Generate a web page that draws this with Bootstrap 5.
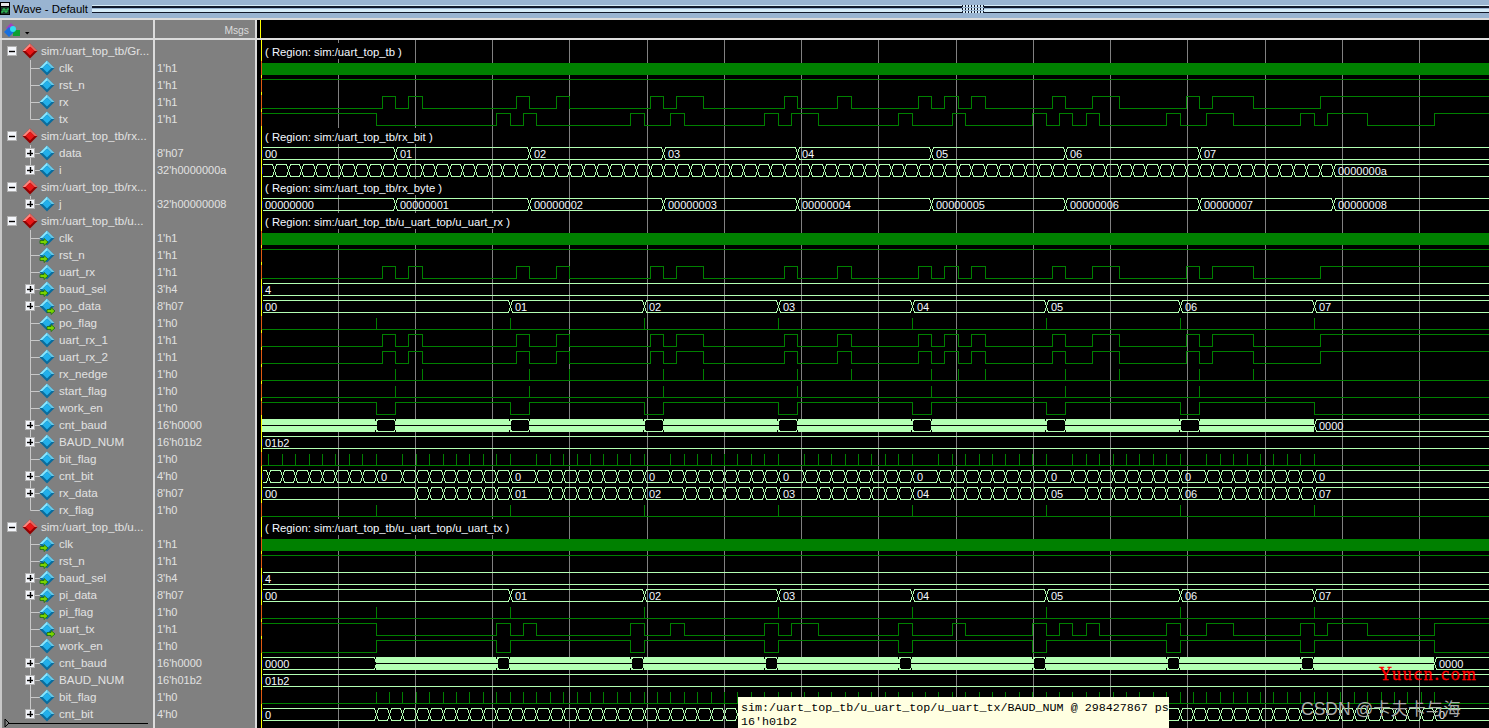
<!DOCTYPE html>
<html lang="en">
<head>
    <meta charset="UTF-8">
    <title>Wave - Default</title>
    <link href="https://cdn.jsdelivr.net/npm/bootstrap@5.3.0/dist/css/bootstrap.min.css" rel="stylesheet">
    <style>
        body { background: #000; font-family: "Liberation Sans", Arial, sans-serif; font-size: 11px; line-height: 17px; }
        .wtitle { height: 18px; background: #99b4d1; color: #000; font-size: 11.4px; line-height: 18px; }
        .wtitle-text { width: 81px; padding-left: 2px; white-space: nowrap; flex-shrink: 0; }
        .grip-lines { height: 9px; margin-top: 5px; background: linear-gradient(to bottom, #d6ecf8 0 1px, #10182a 1px 3px, #99b4d1 3px 4px, #d6ecf8 4px 7px, #10182a 7px 8px, #99b4d1 8px); }
        .grip-first { width: 870px; flex-shrink: 0; }
        .grip-dots { width: 22px; height: 9px; margin-top: 5px; flex-shrink: 0; background-image: repeating-linear-gradient(to bottom, transparent 0 2px, #99b4d1 2px 3px), repeating-linear-gradient(to right, #10182a 0 1px, #d6ecf8 1px 3px); }
        .wsep-h { height: 2px; background: #dcdcdc; }
        .wsep-v { width: 2px; background: #dcdcdc; flex: none; }
        .pane-names { width: 153px; flex: none; background: #808080; border-left: 2px solid #c8c8c8; font-size: 11.6px; }
        .pane-vals { width: 100px; flex: none; background: #808080; color: #e2e2e2; }
        .hdr-row { height: 18px; }
        .msgs-label { color: #dcdcdc; text-align: right; padding: 2px 6px 0 0; font-size: 10.3px; }
        .wave-hdr { flex: 1; background: #000; }
        .cursor-stub { width: 1px; height: 18px; margin-left: 3px; background: #ffff00; }
        .sig-rows { padding-top: 3px; }
        .sig-row { height: 17px; white-space: nowrap; color: #e2e2e2; overflow: hidden; }
        .sig-name { padding-bottom: 2px; }
        .val-row { padding-left: 2px; }
        .wave-svg { flex: 1; display: block; background: #000; }
        .wave-svg text { fill: #f4f8ff; font: 11px "Liberation Sans", Arial, sans-serif; }
        .wave-svg text.region-label { font-size: 11.3px; }
        .scroll-mark { display: block; margin-top: -5px; }
        .wave-tip { position: absolute; left: 738px; top: 697px; width: 431px; height: 31px; background: #ffffe1; color: #000; font: 11.7px/15px "Liberation Mono", "Courier New", monospace; padding: 4px 0 0 3px; white-space: nowrap; }
        .wave-tip-last { line-height: 12px; }
        .mark-red { position: absolute; left: 1379px; top: 663px; color: #ff0000; font: 18px/22px "Liberation Serif", serif; letter-spacing: 1.9px; -webkit-text-stroke: .3px #ff0000; }
        .mark-csdn { position: absolute; left: 1301px; top: 698px; color: #aaaaaa; font: 17.5px/22px "Liberation Sans", "Noto Sans CJK SC", sans-serif; white-space: nowrap; }
    </style>
</head>
<body class="overflow-hidden">

<div class="d-flex flex-column vh-100 overflow-hidden position-relative">

    <div class="wtitle d-flex">
        <svg width="11" height="18" viewBox="0 0 11 18" class="flex-shrink-0">
            <rect x="0" y="2" width="10" height="13" fill="#000"/>
            <rect x="1" y="3" width="8" height="3" fill="#e8e8e8"/>
            <rect x="1" y="7" width="8" height="7" fill="#1c3a2a"/>
            <path d="M1 12H3V9H5V12H7V9H9" fill="none" stroke="#30e060" stroke-width="1"/>
        </svg>
        <div class="wtitle-text">Wave - Default</div>
        <div class="grip-lines grip-first"></div>
        <div class="grip-dots"></div>
        <div class="grip-lines flex-grow-1"></div>
    </div>
    <div class="wsep-h"></div>

    <div class="d-flex hdr-row">
        <div class="pane-names">
            <svg width="30" height="18" viewBox="2 20 30 18">
                <polygon points="11,22 16,27 11,32 6,27" fill="#a040c0"/>
                <rect x="13" y="29" width="7" height="6" fill="#10a030"/>
                <polygon points="9,26 14,31 9,36 4,31" fill="#1870e0"/>
                <circle cx="13" cy="28" r="3" fill="#30e0f0"/>
                <polygon points="25,31 29.5,31 27.2,33.5" fill="#000"/>
            </svg>
        </div>
        <div class="wsep-v"></div>
        <div class="pane-vals msgs-label">Msgs</div>
        <div class="wsep-v"></div>
        <div class="wave-hdr"><div class="cursor-stub"></div></div>
    </div>
    <div class="wsep-h"></div>

    <div class="d-flex flex-grow-1 overflow-hidden">
        <div class="pane-names">
            <div class="sig-rows" id="nameRows"></div>
            <svg class="scroll-mark" width="150" height="10" viewBox="2 0 150 10">
                <path d="M5 1L5 9L9 5Z" fill="none" stroke="#000"/>
                <path d="M9 5.5H148" stroke="#000"/>
            </svg>
        </div>
        <div class="wsep-v"></div>
        <div class="pane-vals">
            <div class="sig-rows" id="valRows"></div>
        </div>
        <div class="wsep-v"></div>
        <svg class="wave-svg" id="waves" height="688" viewBox="257 40 1232 688" shape-rendering="crispEdges"></svg>
    </div>

    <div class="wave-tip">
        <div>sim:/uart_top_tb/u_uart_top/u_uart_tx/BAUD_NUM @ 298427867 ps</div>
        <div class="wave-tip-last">16'h01b2</div>
    </div>
    <div class="mark-red">Yuucn.com</div>
    <div class="mark-csdn">CSDN @卡夫卡与海</div>
</div>

<script src="https://cdn.jsdelivr.net/npm/bootstrap@5.3.0/dist/js/bootstrap.bundle.min.js"></script>
<script>
    // name, value, kind: g = group, s = signal, p = signal with + box; port: i = in arrow, o = out arrow; last child of the group
    const rows = [
        ["sim:/uart_top_tb/Gr...", "", "g"],
        ["clk", "1'h1", "s"], ["rst_n", "1'h1", "s"], ["rx", "1'h1", "s"], ["tx", "1'h1", "s", "", 1],
        ["sim:/uart_top_tb/rx...", "", "g"],
        ["data", "8'h07", "p"], ["i", "32'h0000000a", "p", "", 1],
        ["sim:/uart_top_tb/rx...", "", "g"],
        ["j", "32'h00000008", "p", "", 1],
        ["sim:/uart_top_tb/u...", "", "g"],
        ["clk", "1'h1", "s", "i"], ["rst_n", "1'h1", "s", "i"], ["uart_rx", "1'h1", "s", "i"],
        ["baud_sel", "3'h4", "p", "i"], ["po_data", "8'h07", "p", "o"], ["po_flag", "1'h0", "s", "o"],
        ["uart_rx_1", "1'h1", "s"], ["uart_rx_2", "1'h1", "s"], ["rx_nedge", "1'h0", "s"], ["start_flag", "1'h0", "s"],
        ["work_en", "1'h0", "s"], ["cnt_baud", "16'h0000", "p"], ["BAUD_NUM", "16'h01b2", "p"], ["bit_flag", "1'h0", "s"],
        ["cnt_bit", "4'h0", "p"], ["rx_data", "8'h07", "p"], ["rx_flag", "1'h0", "s", "", 1],
        ["sim:/uart_top_tb/u...", "", "g"],
        ["clk", "1'h1", "s", "i"], ["rst_n", "1'h1", "s", "i"], ["baud_sel", "3'h4", "p", "i"], ["pi_data", "8'h07", "p", "i"],
        ["pi_flag", "1'h0", "s", "i"], ["uart_tx", "1'h1", "s", "o"], ["work_en", "1'h0", "s"], ["cnt_baud", "16'h0000", "p"],
        ["BAUD_NUM", "16'h01b2", "p"], ["bit_flag", "1'h0", "s"], ["cnt_bit", "4'h0", "p", "", 1]
    ];

    function diamond(cx, cy, hi, mid, lo) {
        const r = 7.5, i = 4.5;
        return `<polygon points="${cx},${cy - r} ${cx + r},${cy} ${cx},${cy + r} ${cx - r},${cy}" fill="${lo}"/>` +
            `<polygon points="${cx},${cy - r} ${cx - r},${cy} ${cx - i},${cy} ${cx},${cy - i}" fill="${hi}"/>` +
            `<polygon points="${cx},${cy - r} ${cx + r},${cy} ${cx + i},${cy} ${cx},${cy - i}" fill="${hi}" opacity=".75"/>` +
            `<polygon points="${cx},${cy - i} ${cx + i},${cy} ${cx},${cy + i} ${cx - i},${cy}" fill="${mid}"/>`;
    }

    function box(x, y, minusOnly) {
        return `<rect x="${x + .5}" y="${y + .5}" width="9" height="9" fill="#f4f6fb" stroke="#b0b0b0"/>` +
            `<path d="M${x + 2} ${y + 5.5}H${x + 8}" stroke="#000" stroke-width="1.4"/>` +
            (minusOnly ? "" : `<path d="M${x + 5.5} ${y + 2}V${y + 8}" stroke="#000" stroke-width="1.4"/>`);
    }

    function arrow(x, y) {
        return `<path d="M${x} ${y + 1.5}H${x + 4}V${y - .5}L${x + 8} ${y + 3}L${x + 4} ${y + 6.5}V${y + 4.5}H${x}Z" fill="#7ad400" stroke="#1a6a10" stroke-width=".8"/>`;
    }

    let nameHtml = "", valHtml = "";
    rows.forEach(([name, val, kind, port, last]) => {
        let g = "";
        if (kind === "g") {
            g = box(7, 3, true) + diamond(30, 8, "#ff8a80", "#e81818", "#900000");
            nameHtml += `<div class="sig-row d-flex align-items-center"><svg width="39" height="17" viewBox="2 0 39 17" class="flex-shrink-0">${g}</svg><span class="sig-name">${name}</span></div>`;
        } else {
            g = `<path d="M30.5 0V${last ? 8.5 : 17}" stroke="#c8c8c8"/>`;
            if (kind === "p") g += box(25, 3) + `<path d="M35 8.5H40" stroke="#c8c8c8"/>`;
            else g += `<path d="M30.5 8.5H40" stroke="#c8c8c8"/>`;
            g += diamond(47, 8, "#8ce8ff", "#22b0ea", "#0a6c9c");
            if (port === "i") g += arrow(40, 9);
            if (port === "o") g += arrow(47, 10);
            nameHtml += `<div class="sig-row d-flex align-items-center"><svg width="57" height="17" viewBox="2 0 57 17" class="flex-shrink-0">${g}</svg><span class="sig-name">${name}</span></div>`;
        }
        valHtml += `<div class="sig-row val-row">${val}</div>`;
    });
    document.getElementById("nameRows").innerHTML = nameHtml;
    document.getElementById("valRows").innerHTML = valHtml;

    // ---- waveforms, all coordinates are page pixels ----
    const GREEN = "#008000", BUS = "#b3ffb3", END = 1489;
    const X = n => Math.round(261 + 13.4 * n);          // rx side bit clock
    const M = m => Math.round(261 + 13.4 * (m + .55));  // tx side bit clock
    const rowY = i => 51 + 17 * i;
    const range = (a, b, step = 1) => { const r = []; for (let k = a; k <= b; k += step) r.push(k); return r; };

    let svg = "";
    [338, 415, 492, 569, 647, 724, 801, 878, 956, 1033, 1110, 1187, 1265, 1342, 1419].forEach(x => {
        svg += `<path d="M${x + .5} 40V728" stroke="#808080"/>`;
    });

    function region(i, label, w) {
        const c = rowY(i);
        svg += `<rect x="262" y="${c - 8}" width="${w}" height="16" fill="#000"/><text class="region-label" x="265" y="${c + 5}">${label}</text>`;
    }
    function clock(i) {
        const c = rowY(i);
        svg += `<rect x="262" y="${c - 5}" width="${END - 262}" height="12" fill="${GREEN}"/>`;
    }
    function digital(i, high, xs) {
        const c = rowY(i);
        let up = high, d = `M262 ${(up ? c - 6 : c + 6) + .5}`;
        xs.forEach(x => { up = !up; d += `H${x + .5}V${(up ? c - 6 : c + 6) + .5}`; });
        svg += `<path d="${d}H${END}" fill="none" stroke="${GREEN}"/>`;
    }
    function spikes(i, xs) {
        const c = rowY(i);
        let d = `M262 ${c + 6.5}H${END}`;
        xs.forEach(x => { d += `M${x + .5} ${c + 6.5}V${c - 5}`; });
        svg += `<path d="${d}" fill="none" stroke="${GREEN}"/>`;
    }
    function bus(i, xs, labels) {
        const c = rowY(i), t = c - 5.5, b = c + 6.5, m = c + .5, edges = [262, ...xs, END];
        let d = "";
        for (let k = 0; k + 1 < edges.length; k++) {
            const a = edges[k] + .5, e = edges[k + 1] + .5, closes = k + 2 < edges.length;
            const l = k ? a + 2 : a, r = closes ? e - 2 : e;
            d += (k ? `M${a} ${m}L${l} ${t}` : `M${l} ${t}`) + `H${r}` +
                (closes ? `L${e} ${m}L${r} ${b}` : `M${r} ${b}`) + `H${l}` + (k ? `L${a} ${m}` : "");
        }
        svg += `<path d="${d}" fill="none" stroke="${BUS}"/><rect x="262" y="${c - 3}" width="1" height="7" fill="#000080"/>`;
        labels.forEach(([x, s]) => { svg += `<text x="${x}" y="${c + 5}">${s}</text>`; });
    }
    // counter running so fast the cells merge: solid band with a centre line and black gaps
    function fastBus(i, from, to, gaps, gapW) {
        const c = rowY(i), t = c - 6;
        svg += `<rect x="${from}" y="${t}" width="${to - from}" height="13" fill="${BUS}"/>`;
        svg += `<path d="M${from} ${c + .5}H${to}" stroke="#000"/>`;
        gaps.forEach(x => {
            svg += `<rect x="${x}" y="${t + 1}" width="${gapW}" height="11" rx="3" fill="#000"/>`;
            svg += `<path d="M${x - 1.5} ${t}V${t + 2}M${x - 1.5} ${t + 11}V${t + 13}M${x + gapW + .5} ${t}V${t + 2}M${x + gapW + .5} ${t + 11}V${t + 13}" stroke="#000"/>`;
        });
    }

    const rxHigh = [[9,10],[11,12],[19,20],[22,23],[29,30],[31,33],[39,40],[43,44],[49,50],[51,52],[53,54],[59,60],[62,64],[69,70],[71,74],[79,999]];
    const txHigh = [[17,18],[19,20],[27,28],[30,31],[37,38],[39,41],[47,48],[51,52],[57,58],[59,60],[61,62],[67,68],[70,72],[77,78],[79,82],[87,999]];
    const rxEdges = rxHigh.flat().filter(n => n < 999).map(X);
    const txEdges = [8, ...txHigh.flat().filter(n => n < 999)].map(M);
    const rxFalls = rxHigh.map(p => p[1]).filter(n => n < 999).map(X);
    const decades = range(0, 7).map(j => M(8 + 10 * j));      // 375, 509 ... 1314
    const bytes2 = k => "0" + k;
    const byteEdges = range(0, 6).map(j => M(18 + 10 * j));
    const byteLabels = [[265, "00"], ...byteEdges.map((x, j) => [x + 5, bytes2(j + 1)])];

    region(0, "( Region: sim:/uart_top_tb )", 142);
    clock(1);
    digital(2, true, []);
    digital(3, false, rxEdges);
    digital(4, true, txEdges);

    region(5, "( Region: sim:/uart_top_tb/rx_bit )", 176);
    const slowEdges = range(1, 7).map(j => X(10 * j));
    bus(6, slowEdges, [[265, "00"], ...slowEdges.map((x, j) => [x + 5, bytes2(j + 1)])]);
    bus(7, range(1, 80).map(X), [[X(80) + 5, "0000000a"]]);

    region(8, "( Region: sim:/uart_top_tb/rx_byte )", 186);
    const jEdges = range(1, 8).map(j => X(10 * j));
    bus(9, jEdges, [[265, "00000000"], ...jEdges.map((x, j) => [x + 5, "0000000" + (j + 1)])]);

    region(10, "( Region: sim:/uart_top_tb/u_uart_top/u_uart_rx )", 252);
    clock(11);
    digital(12, true, []);
    digital(13, false, rxEdges);
    bus(14, [], [[265, "4"]]);
    bus(15, byteEdges, byteLabels);
    spikes(16, decades);
    digital(17, false, rxEdges);
    digital(18, false, rxEdges);
    spikes(19, rxFalls);
    spikes(20, range(1, 7).map(j => X(10 * j)));
    digital(21, true, [...range(0, 6).flatMap(j => [M(8 + 10 * j), X(10 + 10 * j)]), M(78)]);
    bus(22, [M(78)], [[M(78) + 5, "0000"]]);
    fastBus(22, 262, M(78), range(0, 6).map(j => 377 + 134 * j), 18);
    bus(23, [], [[265, "01b2"]]);
    spikes(24, range(0, 78).filter(m => m % 10 !== 9).map(M));
    const bitEdges = range(0, 78).filter(m => m % 10 !== 9);
    bus(25, bitEdges.map(M), range(0, 7).map(j => [M(8 + 10 * j) + 5, "0"]));
    const dataEdges = range(0, 6).flatMap(j => range(11 + 10 * j, 18 + 10 * j));
    bus(26, dataEdges.map(M), [[265, "00"], ...range(0, 6).map(j => [M(18 + 10 * j) + 5, bytes2(j + 1)])]);
    spikes(27, decades);

    region(28, "( Region: sim:/uart_top_tb/u_uart_top/u_uart_tx )", 252);
    clock(29);
    digital(30, true, []);
    bus(31, [], [[265, "4"]]);
    bus(32, byteEdges, byteLabels);
    spikes(33, decades);
    digital(34, true, txEdges);
    digital(35, false, [M(8), ...range(0, 6).flatMap(j => [M(17 + 10 * j), M(18 + 10 * j)]), M(87)]);
    bus(36, [M(8), M(87)], [[265, "0000"], [M(87) + 5, "0000"]]);
    fastBus(36, M(8), M(87), range(0, 6).map(j => 498 + 134 * j), 11);
    bus(37, [], [[265, "01b2"]]);
    spikes(38, range(8, 87).map(M));
    bus(39, range(8, 87).map(M), [[265, "0"], [M(87) + 5, "0"]]);

    // cursor at the left edge, orange where a scalar signal is listed
    svg += `<rect x="261" y="40" width="1" height="688" fill="#ffff00"/>`;
    rows.forEach((r, i) => {
        if (r[2] === "s") svg += `<rect x="261" y="${rowY(i) - 7}" width="1" height="14" fill="#e05a10"/>`;
    });

    document.getElementById("waves").innerHTML = svg;
</script>
</body>
</html>
